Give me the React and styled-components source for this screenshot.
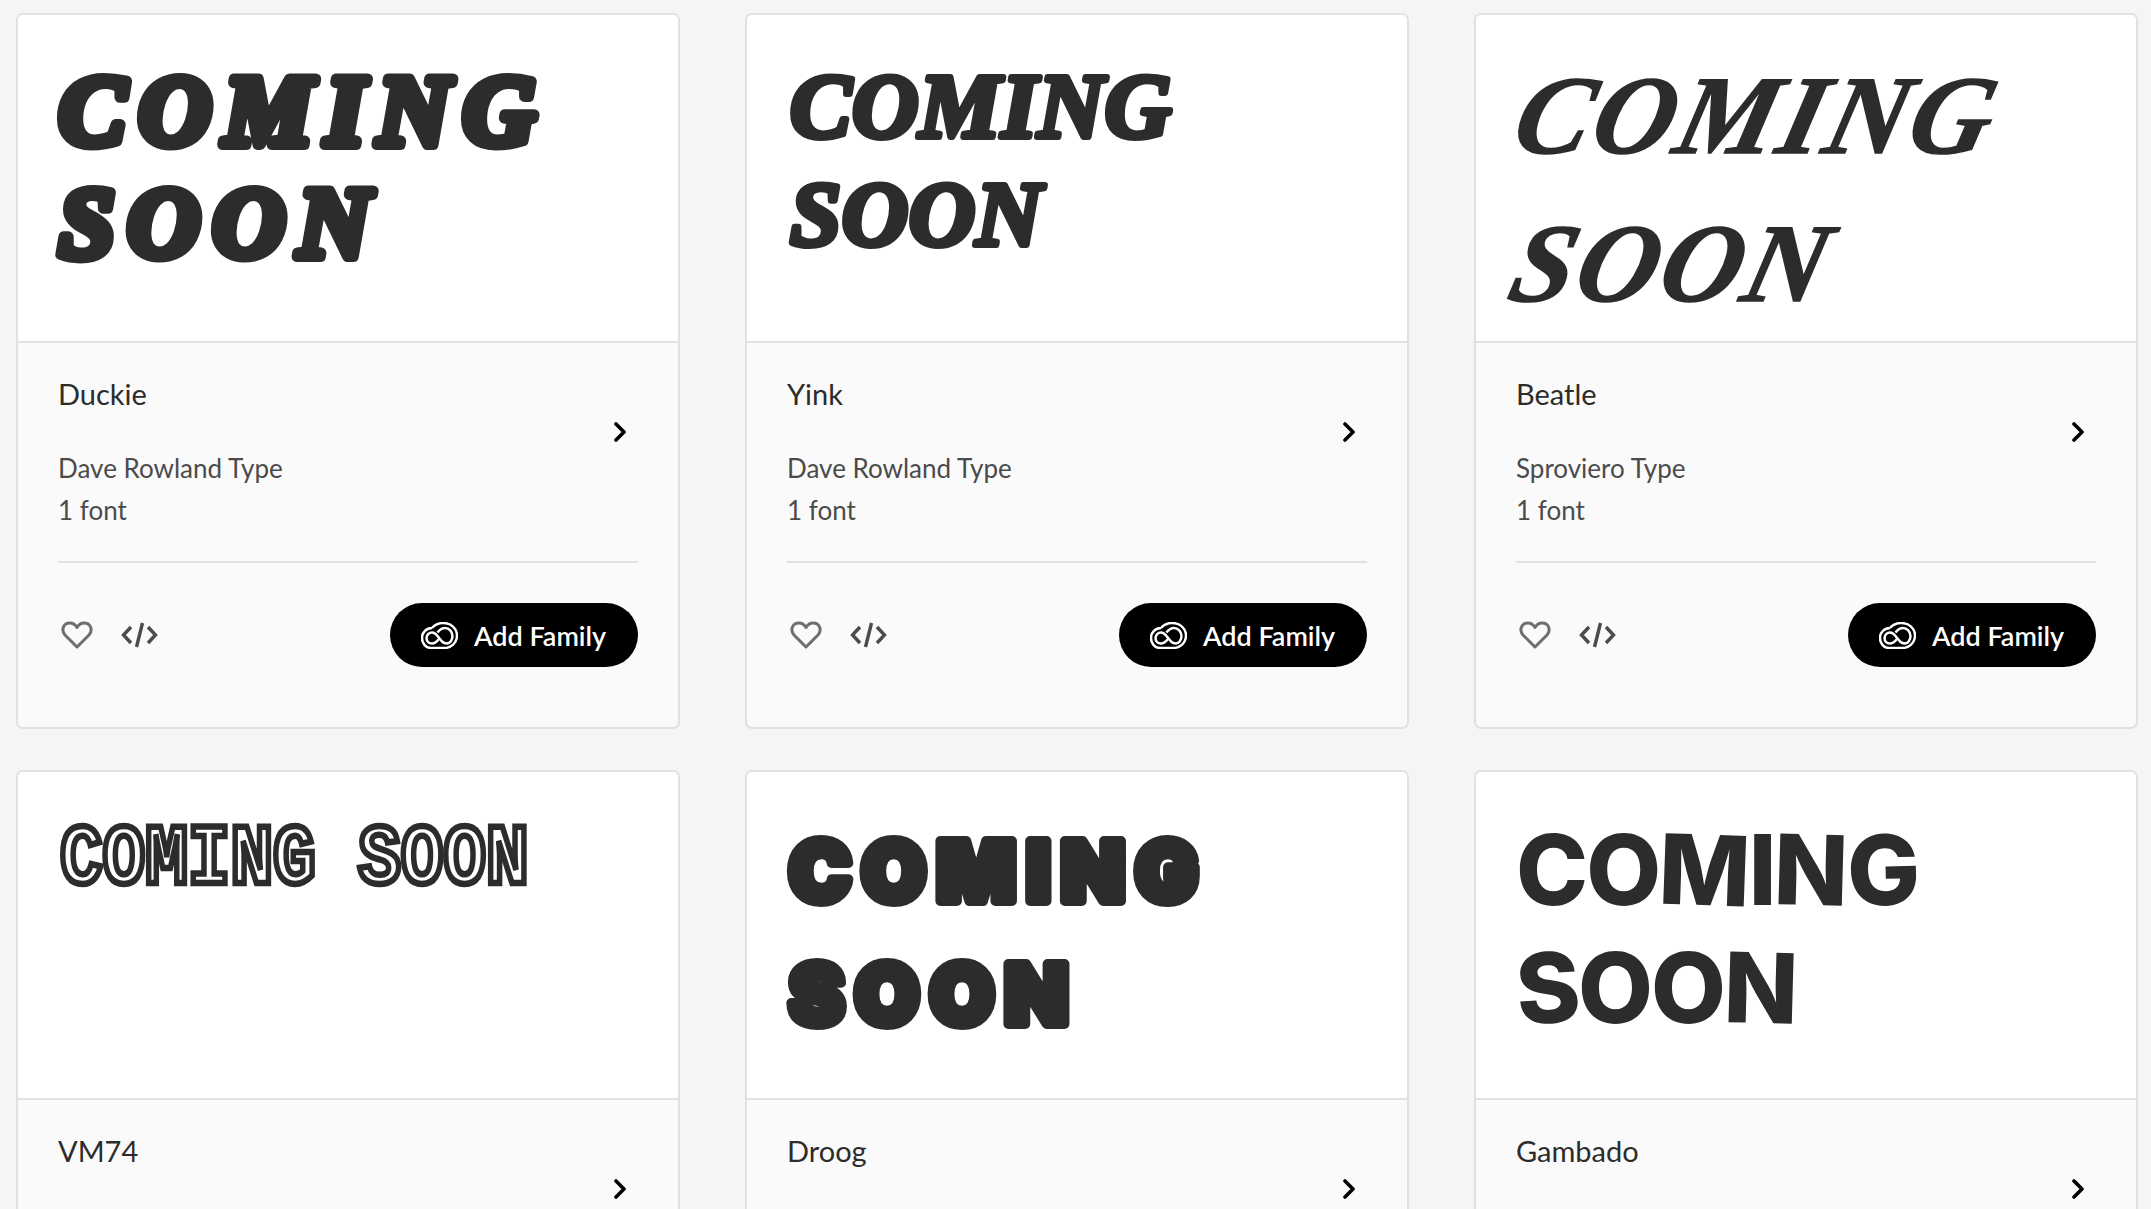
import React from "react";
import styled, { createGlobalStyle } from "styled-components";

const GlobalStyle = createGlobalStyle`
  html, body {
    margin: 0;
    height: 1209px;
    overflow: hidden;
    background: #f5f5f5;
  }
`;

const Grid = styled.div`
  display: grid;
  grid-template-columns: repeat(3, 664px);
  column-gap: 65px;
  row-gap: 41px;
  padding: 13px 0 0 16px;
  font-family: Lato, "Open Sans", sans-serif;
`;

const Card = styled.article`
  border: 2px solid #e1e1e1;
  border-radius: 7px;
  background: #fafafa;
  overflow: hidden;
`;

const Preview = styled.div`
  height: 328px;
  box-sizing: border-box;
  background: #fff;
  border-bottom: 2px solid #e1e1e1;
  color: #2c2c2c;
  overflow: hidden;
`;

const Art = styled.svg`
  display: block;
  width: 100%;
  height: 100%;
`;

const DuckieText = styled.text`
  font: italic 700 100px "Liberation Serif", serif;
  letter-spacing: 13px;
  fill: #2c2c2c;
  stroke: #2c2c2c;
  stroke-width: 11px;
  stroke-linejoin: round;
`;

const YinkText = styled.text`
  font: italic 700 92px "Liberation Serif", serif;
  letter-spacing: 0.6px;
  fill: #2c2c2c;
  stroke: #2c2c2c;
  stroke-width: 6px;
  stroke-linejoin: round;
`;

const BeatleText = styled.text`
  font: italic 700 112px "Liberation Serif", serif;
  letter-spacing: 3px;
  fill: #2c2c2c;
  stroke: #2c2c2c;
  stroke-width: 1.5px;
`;

const VmText = styled.text`
  font: 700 71px "Liberation Mono", monospace;
  fill: #fff;
  stroke: #2c2c2c;
  stroke-width: 5.5px;
  stroke-linejoin: miter;
`;

const DroogText = styled.text`
  font: 900 83px Inter, sans-serif;
  letter-spacing: 10.5px;
  fill: #2c2c2c;
  stroke: #2c2c2c;
  stroke-width: 10px;
  stroke-linejoin: round;
`;

const GambadoBlock = styled.div`
  padding: 39px 0 0 40px;
`;

const GambadoLine = styled.div`
  font: 800 97px/118px Inter, sans-serif;
  letter-spacing: -2px;
  white-space: nowrap;
`;

const Glyph = styled.span`
  display: inline-block;
  transform: rotate(${(p) => p.$tilt || 0}deg);
`;

const Details = styled.div`
  padding: 31px 40px 59px 40px;
  min-height: 294px;
`;

const InfoRow = styled.div`
  display: flex;
  justify-content: space-between;
  align-items: flex-start;
`;

const Name = styled.div`
  font-size: 29px;
  line-height: 40px;
  color: #2c2c2c;
`;

const Meta = styled.div`
  margin-top: 33px;
  font-size: 26px;
  line-height: 42px;
  color: #4b4b4b;
`;

const Chevron = styled.svg`
  width: 14px;
  height: 20px;
  margin: 48px 11px 0 0;
  fill: none;
  stroke: #000;
  stroke-width: 3.6;
  stroke-linecap: round;
  stroke-linejoin: round;
`;

const Separator = styled.hr`
  margin: 30px 0 0;
  border: 0;
  height: 2px;
  background: #e1e1e1;
`;

const Actions = styled.div`
  display: flex;
  align-items: center;
  margin-top: 40px;
`;

const HeartIcon = styled.svg`
  width: 32px;
  height: 28px;
  margin-left: 3px;
  fill: none;
  stroke: #6e6e6e;
  stroke-width: 3;
  stroke-linejoin: round;
`;

const CodeIcon = styled.svg`
  width: 37px;
  height: 26px;
  margin-left: 28px;
  fill: none;
  stroke: #4b4b4b;
  stroke-width: 3.4;
`;

const AddButton = styled.button`
  display: flex;
  align-items: center;
  gap: 16px;
  height: 64px;
  width: 248px;
  margin-left: auto;
  padding: 0 0 0 31px;
  border: 0;
  border-radius: 32px;
  background: #000;
  color: #fff;
  font-family: Lato, sans-serif;
  font-size: 27px;
  font-weight: 600;
`;

const CloudIcon = styled.svg`
  width: 37px;
  height: 27px;
  fill: none;
  stroke: #fff;
  stroke-width: 2.5;
`;

const Heart = () => (
  <HeartIcon viewBox="0 0 32 28">
    <path d="M16 26 4 14C0 9.500 2 2 9 2c3.500 0 5.500 2 7 4.500C17.500 4 19.500 2 23 2c7 0 9 7.500 5 12Z" />
  </HeartIcon>
);

const Code = () => (
  <CodeIcon viewBox="0 0 37 26">
    <path d="M10 5 2.500 13l7.500 8M27 5l7.500 8-7.500 8M21.500 1l-6 24" />
  </CodeIcon>
);

const Cloud = () => (
  <CloudIcon viewBox="0 0 37 27">
    <path d="M11 6C14 2.500 18 1 22 1c8 0 14 5.500 14 12.500C36 21 30 26 23 26H10C5 26 1 21.500 1 16S5.500 6 11 6" />
    <path d="M11 21.500C7.500 21.500 5.500 19 5.500 16S8 10.500 11 10.500c2.500 0 4 1.500 5.500 3.500l4.500 5.500c1.500 1.500 2.500 2 5 2 3 0 5.500-3.500 5.500-7.500C31.500 9.500 28 6 24 6c-4 0-6 2.500-7.500 4.500" />
    <path d="M11 21.500c3 0 5-2 7-4.500" />
  </CloudIcon>
);

const tilts = { M: 2, N: 1.5, G: -1.5, S: -4, I: 0 };

const GambadoSpecimen = () => (
  <GambadoBlock>
    {["COMING", "SOON"].map((word) => (
      <GambadoLine key={word}>
        {word.split("").map((ch, i) => (
          <Glyph key={i} $tilt={tilts[ch]}>
            {ch}
          </Glyph>
        ))}
      </GambadoLine>
    ))}
  </GambadoBlock>
);

// drawn type samples, x/y are the baseline inside the preview
const artSpecimen = (Text, lines, warp = "") => () => (
  <Art>
    {lines.map(([word, x, y]) => (
      <Text key={word} transform={`translate(${x} ${y}) ${warp}`}>
        {word}
      </Text>
    ))}
  </Art>
);

const families = [
  {
    name: "Duckie",
    foundry: "Dave Rowland Type",
    Specimen: artSpecimen(DuckieText, [
      ["COMING", 41, 129],
      ["SOON", 41, 241],
    ]),
  },
  {
    name: "Yink",
    foundry: "Dave Rowland Type",
    Specimen: artSpecimen(YinkText, [
      ["COMING", 43, 122],
      ["SOON", 43, 230],
    ]),
  },
  {
    name: "Beatle",
    foundry: "Sproviero Type",
    Specimen: artSpecimen(
      BeatleText,
      [
        ["COMING", 33, 138],
        ["SOON", 29, 286],
      ],
      "skewX(-14)"
    ),
  },
  {
    name: "VM74",
    Specimen: artSpecimen(VmText, [["COMING SOON", 42, 111]], "scale(1 1.19)"),
  },
  {
    name: "Droog",
    Specimen: artSpecimen(DroogText, [
      ["COMING", 42, 129],
      ["SOON", 42, 252],
    ]),
  },
  {
    name: "Gambado",
    Specimen: GambadoSpecimen,
  },
];

function FamilyCard({ family }) {
  const { Specimen } = family;
  return (
    <Card>
      <Preview>
        <Specimen />
      </Preview>
      <Details>
        <InfoRow>
          <div>
            <Name>{family.name}</Name>
            {family.foundry && (
              <Meta>
                {family.foundry}
                <br />1 font
              </Meta>
            )}
          </div>
          <Chevron viewBox="0 0 14 20">
            <path d="M3 2l8 8-8 8" />
          </Chevron>
        </InfoRow>
        {family.foundry && (
          <>
            <Separator />
            <Actions>
              <Heart />
              <Code />
              <AddButton>
                <Cloud />
                Add Family
              </AddButton>
            </Actions>
          </>
        )}
      </Details>
    </Card>
  );
}

export default function App() {
  return (
    <>
      <GlobalStyle />
      <Grid>
        {families.map((family) => (
          <FamilyCard key={family.name} family={family} />
        ))}
      </Grid>
    </>
  );
}
